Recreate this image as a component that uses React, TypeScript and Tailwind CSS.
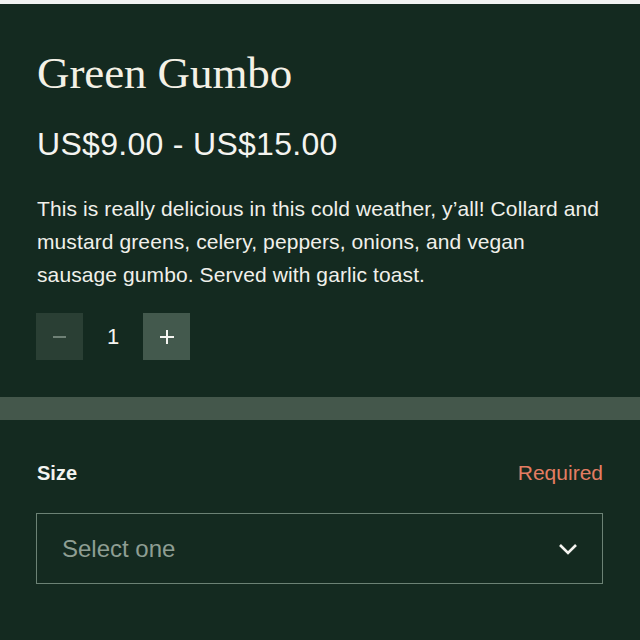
import React, { useState } from 'react';

const sans = "font-['Liberation_Sans','Roboto',sans-serif]";

const App: React.FC = () => {
    const [qty, setQty] = useState(1);

    return (
        <div className="w-[640px] h-[640px] overflow-hidden bg-[#142a20] flex flex-col">
            <div className="h-[4px] bg-[#f1f3f2]"></div>
            <div className="px-[37px] pt-[41px]">
                <h1 className="font-['Liberation_Serif','DejaVu_Serif',serif] text-[45px] leading-[56px] text-[#f4f1e6] tracking-[-0.1px]">
                    Green Gumbo
                </h1>
                <div className={`${sans} text-[32px] leading-[40px] text-[#f4f4f0] mt-[23px] tracking-[0.3px]`}>
                    US$9.00 - US$15.00
                </div>
                <p className={`${sans} text-[21px] leading-[33px] text-[#f0f0ea] mt-[28px] tracking-[0.1px]`}>
                    This is really delicious in this cold weather, y’all! Collard and mustard greens, celery, peppers, onions, and vegan sausage gumbo. Served with garlic toast.
                </p>
                <div className="flex items-center mt-[22px] -ml-px">
                    <button
                        onClick={() => setQty(Math.max(1, qty - 1))}
                        className="w-[47px] h-[47px] bg-[#2a3f34] flex items-center justify-center"
                    >
                        <span className="block w-[13px] h-[2px] bg-[#6f8176]"></span>
                    </button>
                    <div className={`${sans} w-[60px] text-center text-[22px] text-[#f4f4f0]`}>{qty}</div>
                    <button
                        onClick={() => setQty(qty + 1)}
                        className="w-[47px] h-[47px] bg-[#43594d] flex items-center justify-center"
                    >
                        <svg width="16" height="16" viewBox="0 0 16 16">
                            <path d="M8 1v14M1 8h14" stroke="#f4f4f0" strokeWidth="2" />
                        </svg>
                    </button>
                </div>
            </div>
            <div className="h-[23px] bg-[#44574b] mt-[37px]"></div>
            <div className="px-[37px] pt-[40px]">
                <div className={`${sans} flex justify-between items-center leading-[26px]`}>
                    <span className="font-bold text-[20px] text-[#f4f4f0]">Size</span>
                    <span className="text-[21px] text-[#e47d63]">Required</span>
                </div>
                <div className="mt-[27px] -ml-px h-[71px] border border-[#6c8275] flex items-center justify-between pl-[25px] pr-[23px]">
                    <span className={`${sans} text-[24px] text-[#8e9e93]`}>Select one</span>
                    <svg width="22" height="14" viewBox="0 0 22 14">
                        <path d="M3 3l8 8 8-8" fill="none" stroke="#f4f4f0" strokeWidth="2.6" />
                    </svg>
                </div>
            </div>
        </div>
    );
};

export default App;
